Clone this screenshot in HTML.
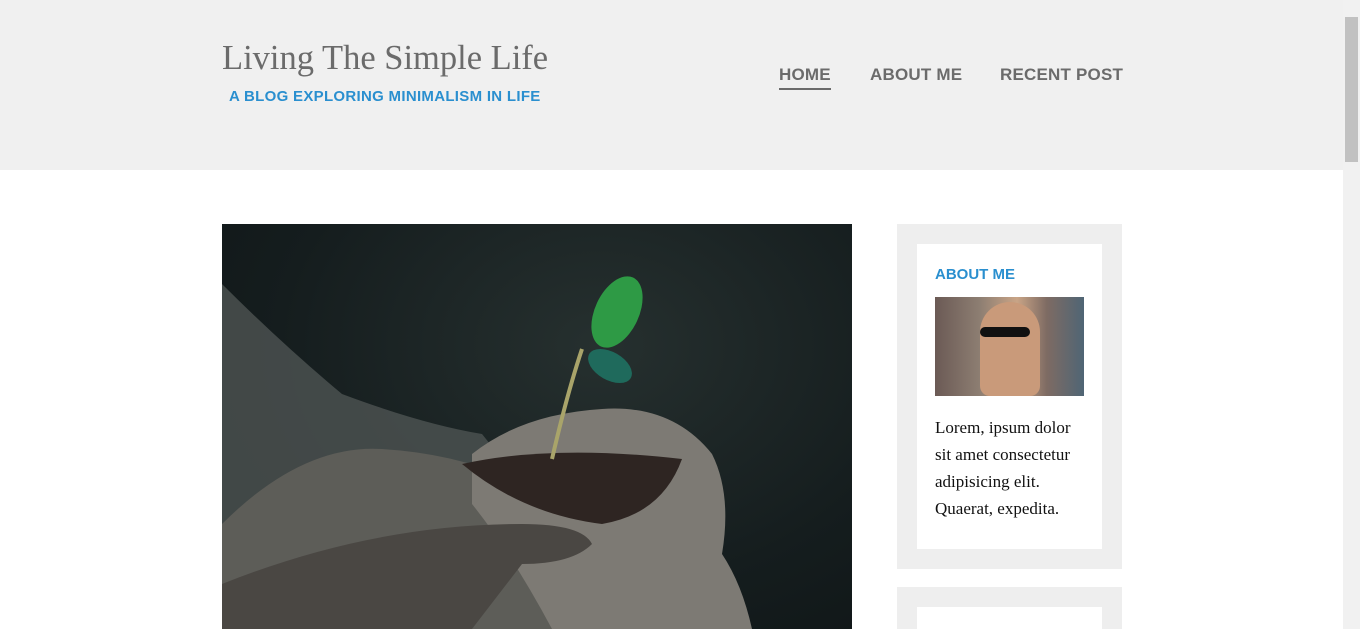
<!DOCTYPE html>
<html style="overflow:hidden;height:629px"><head><style>
body{margin:0;width:1360px;height:629px;overflow:hidden;background:#fff;font-family:"Liberation Sans",sans-serif;position:relative}
.hdr{position:absolute;left:0;top:0;width:1343px;height:170px;background:#f0f0f0}
.title{position:absolute;left:222px;top:39px;font-family:"Liberation Serif",serif;font-size:34.5px;color:#6b6b6b;white-space:nowrap}
.sub{position:absolute;left:229px;top:88px;font-size:15px;font-weight:bold;color:#2a8fcf;letter-spacing:.3px;white-space:nowrap}
.nav{position:absolute;top:65px;font-size:17px;font-weight:bold;color:#6b6b6b;letter-spacing:.2px}
.img{position:absolute;left:222px;top:224px;width:630px;height:405px;overflow:hidden;background:radial-gradient(ellipse at 60% 30%,#26302f 0%,#151d1e 60%,#0f1516 100%)}
.sb{position:absolute;left:897px;top:224px;width:185px;height:305px;border:20px solid #eeeeee;background:#fff}
.sb2{position:absolute;left:897px;top:587px;width:185px;height:22px;border:20px solid #eeeeee;border-bottom:0;background:#fff}
.sb h3{margin:0;position:absolute;left:18px;top:22px;font-size:15px;color:#2a8fcf;font-weight:bold}
.ph{position:absolute;left:18px;top:53px;width:149px;height:99px;background:linear-gradient(90deg,#6b5a55 0%,#8d7e72 30%,#c9a486 55%,#7e6b63 75%,#4f6575 100%);overflow:hidden}
.sb p{position:absolute;left:18px;top:170px;margin:0;width:150px;font-family:"Liberation Serif",serif;font-size:17px;line-height:27px;color:#111}
.scroll{position:absolute;right:0;top:0;width:17px;height:629px;background:#f1f1f1}
.thumb{position:absolute;right:2px;top:17px;width:13px;height:145px;background:#c1c1c1}
</style></head><body>
<div class="hdr">
<div class="title">Living The Simple Life</div>
<div class="sub">A BLOG EXPLORING MINIMALISM IN LIFE</div>
<div class="nav" style="left:779px">HOME<div style="height:2px;background:#6b6b6b;margin-top:3px"></div></div>
<div class="nav" style="left:870px">ABOUT ME</div>
<div class="nav" style="left:1000px">RECENT POST</div>
</div>
<div class="img">
<svg width="630" height="405" viewBox="0 0 630 405">
<path d="M0 60 Q60 120 120 170 Q200 200 260 210 L300 260 L0 330 Z" fill="#4d5452" opacity=".8"/>
<path d="M0 300 Q80 220 160 225 Q240 230 300 260 Q360 280 380 300 L380 405 L0 405 Z" fill="#5d5d58"/>
<path d="M250 230 Q300 190 380 185 Q450 180 490 230 Q510 270 500 330 Q520 360 530 405 L330 405 Q290 330 250 280 Z" fill="#7d7a74"/>
<path d="M240 240 Q330 220 460 235 Q440 290 380 300 Q300 290 240 240 Z" fill="#2e2522"/>
<path d="M0 360 Q150 300 300 300 Q360 300 370 320 Q350 340 300 340 L250 405 L0 405 Z" fill="#4a4743"/>
<path d="M330 235 Q345 170 360 125" stroke="#a9a46a" stroke-width="4" fill="none"/>
<ellipse cx="395" cy="88" rx="22" ry="38" transform="rotate(25 395 88)" fill="#2e9a45"/>
<ellipse cx="388" cy="142" rx="24" ry="14" transform="rotate(30 388 142)" fill="#1f6a5c"/>
</svg>
</div>
<div class="sb"><h3>ABOUT ME</h3><div class="ph"><div style="position:absolute;left:45px;top:5px;width:60px;height:94px;border-radius:30px 30px 10px 10px;background:#c99a7a"></div><div style="position:absolute;left:45px;top:30px;width:50px;height:10px;background:#111;border-radius:5px"></div></div>
<p>Lorem, ipsum dolor sit amet consectetur adipisicing elit. Quaerat, expedita.</p></div>
<div class="sb2"></div>
<div class="scroll"><div class="thumb"></div></div>
</body></html>
